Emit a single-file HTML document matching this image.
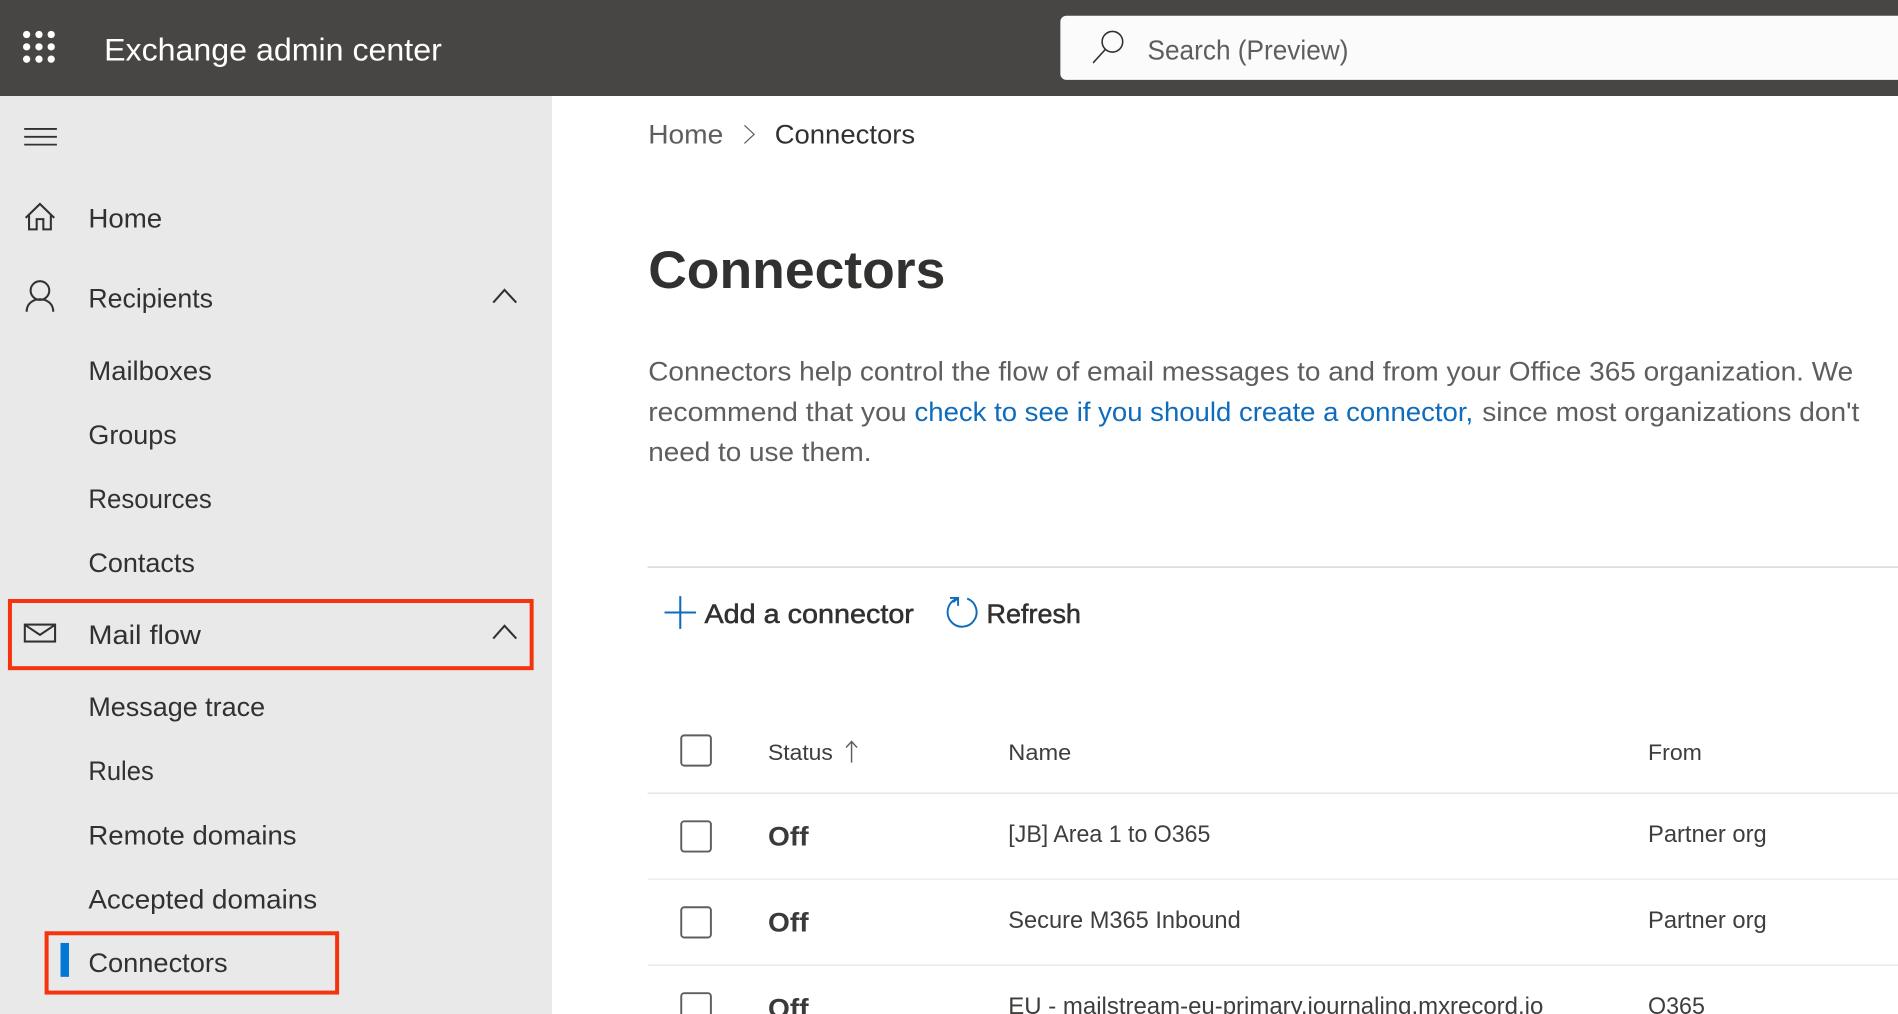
<!DOCTYPE html>
<html>
<head>
<meta charset="utf-8">
<title>Exchange admin center</title>
<style>
html,body{margin:0;padding:0;background:#fff;width:1898px;height:1014px;overflow:hidden}
svg{display:block}
text{font-family:"Liberation Sans",sans-serif;fill:#323130;font-size:22.5px}
.p{fill:#605e5c}
.l{fill:#0f6cbd}
.th{font-size:18.5px;fill:#3f3e3d}
.td{font-size:19.5px;fill:#3f3e3d}
.sb{stroke:#323130;stroke-width:.45px}
.off{font-size:22.5px;font-weight:bold;fill:#3b3a39}
.ic{fill:none;stroke:#323130;stroke-width:1.7}
.cb{fill:#fff;stroke:#605e5c;stroke-width:1.6}
</style>
</head>
<body>
<svg xmlns="http://www.w3.org/2000/svg" width="1898" height="1014" viewBox="0 0 1568 837.7">
<rect x="0" y="0" width="1568" height="837.7" fill="#ffffff"/>
<rect x="0" y="79" width="456" height="759" fill="#e9e9e9"/>
<rect x="0" y="0" width="1568" height="79.3" fill="#484644"/>

<g fill="#ffffff">
<circle cx="22" cy="28.5" r="3"/><circle cx="32.2" cy="28.5" r="3"/><circle cx="42.3" cy="28.5" r="3"/>
<circle cx="22" cy="38.7" r="3"/><circle cx="32.2" cy="38.7" r="3"/><circle cx="42.3" cy="38.7" r="3"/>
<circle cx="22" cy="48.9" r="3"/><circle cx="32.2" cy="48.9" r="3"/><circle cx="42.3" cy="48.9" r="3"/>
</g>
<text x="86" y="50" textLength="279" lengthAdjust="spacingAndGlyphs" style="fill:#fff;font-size:26px">Exchange admin center</text>

<rect x="876" y="13" width="720" height="53" rx="5" fill="#fbfbfb"/>
<circle cx="919" cy="34.500" r="8.500" fill="none" stroke="#323130" stroke-width="1.300"/>
<path d="M913 41L903 52" fill="none" stroke="#323130" stroke-width="1.300"/>
<text x="948" y="49" textLength="166" lengthAdjust="spacingAndGlyphs" style="fill:#605e5c;font-size:23px">Search (Preview)</text>

<path d="M20 106.500H47M20 113H47M20 119.500H47" fill="none" stroke="#323130" stroke-width="1.500"/>

<path class="ic" d="M21.200 180L33 168.500L44.800 180M24 177.500V189.500H30.300V181H35.800V189.500H42V177.500"/>
<text x="73" y="188" textLength="61" lengthAdjust="spacingAndGlyphs">Home</text>

<circle class="ic" cx="33" cy="240" r="7.700"/>
<path class="ic" d="M22 257.500C22 251 27 247.200 33 247.200C39 247.200 44 251 44 257.500"/>
<text x="73" y="254" textLength="103" lengthAdjust="spacingAndGlyphs">Recipients</text>
<path class="ic" d="M407.500 250L416.800 239.500L426.500 250"/>

<text x="73" y="314" textLength="102" lengthAdjust="spacingAndGlyphs">Mailboxes</text>
<text x="73" y="367" textLength="73" lengthAdjust="spacingAndGlyphs">Groups</text>
<text x="73" y="419.500" textLength="102" lengthAdjust="spacingAndGlyphs">Resources</text>
<text x="73" y="472.500" textLength="88" lengthAdjust="spacingAndGlyphs">Contacts</text>

<rect x="8.200" y="496.500" width="431" height="55.500" fill="none" stroke="#f5330e" stroke-width="3.300"/>
<rect x="20.500" y="516" width="25" height="14" fill="none" stroke="#323130" stroke-width="1.700"/>
<path class="ic" d="M21 516.500L33 524.500L45 516.500"/>
<text x="73" y="532" textLength="93" lengthAdjust="spacingAndGlyphs">Mail flow</text>
<path class="ic" d="M407.500 527.500L416.800 517L426.500 527.500"/>

<text x="73" y="591.500" textLength="146" lengthAdjust="spacingAndGlyphs">Message trace</text>
<text x="73" y="644.500" textLength="54" lengthAdjust="spacingAndGlyphs">Rules</text>
<text x="73" y="697.500" textLength="172" lengthAdjust="spacingAndGlyphs">Remote domains</text>
<text x="73" y="750.500" textLength="189" lengthAdjust="spacingAndGlyphs">Accepted domains</text>
<rect x="38.500" y="771" width="240" height="49" fill="none" stroke="#f5330e" stroke-width="3.300"/>
<rect x="50" y="779" width="7" height="28" fill="#0078d4"/>
<text x="73" y="803" textLength="115" lengthAdjust="spacingAndGlyphs">Connectors</text>

<text class="p" x="535.500" y="118.500" textLength="62" lengthAdjust="spacingAndGlyphs">Home</text>
<path d="M615 103.500L623 111L615 118.500" fill="none" stroke="#605e5c" stroke-width="1"/>
<text x="640" y="118.500" textLength="116" lengthAdjust="spacingAndGlyphs">Connectors</text>

<text x="535.500" y="238" textLength="245.500" lengthAdjust="spacingAndGlyphs" style="font-size:44px;font-weight:bold">Connectors</text>

<text class="p" x="535.500" y="314.500" textLength="995.500" lengthAdjust="spacingAndGlyphs">Connectors help control the flow of email messages to and from your Office 365 organization. We</text>
<text class="p" x="535.500" y="348" textLength="213.500" lengthAdjust="spacingAndGlyphs">recommend that you</text>
<text class="l" x="755.500" y="348" textLength="461.500" lengthAdjust="spacingAndGlyphs">check to see if you should create a connector,</text>
<text class="p" x="1224.500" y="348" textLength="311.500" lengthAdjust="spacingAndGlyphs">since most organizations don't</text>
<text class="p" x="535.500" y="381" textLength="184.500" lengthAdjust="spacingAndGlyphs">need to use them.</text>

<rect x="535" y="467.800" width="1033" height="1.500" fill="#dddddd"/>

<path d="M549 506H575M562 492.500V519.500" fill="none" stroke="#0f6cbd" stroke-width="1.700"/>
<text class="sb" x="582" y="514.500" textLength="173" lengthAdjust="spacingAndGlyphs">Add a connector</text>
<path d="M799 494.500A12 12 0 1 1 789.500 495" fill="none" stroke="#0f6cbd" stroke-width="1.600"/>
<path d="M784.800 494H791.500V500.500M791.500 494L787.500 497.500" fill="none" stroke="#0f6cbd" stroke-width="1.600"/>
<text class="sb" x="815" y="514.500" textLength="78" lengthAdjust="spacingAndGlyphs">Refresh</text>

<rect class="cb" x="562.800" y="607.500" width="24.500" height="25" rx="2.500"/>
<text class="th" x="634.500" y="628" textLength="53.500" lengthAdjust="spacingAndGlyphs">Status</text>
<path d="M703.500 612.500V630M699 617.500L703.500 612.500L708 617.500" fill="none" stroke="#605e5c" stroke-width="1.200"/>
<text class="th" x="833" y="628" textLength="52" lengthAdjust="spacingAndGlyphs">Name</text>
<text class="th" x="1361.500" y="628" textLength="44.500" lengthAdjust="spacingAndGlyphs">From</text>
<rect x="535" y="654.600" width="1033" height="1.500" fill="#e9e9e9"/>

<rect class="cb" x="562.800" y="678.500" width="24.500" height="25" rx="2.500"/>
<text class="off" x="634.500" y="698.500" textLength="33.500" lengthAdjust="spacingAndGlyphs">Off</text>
<text class="td" x="833" y="695.500" textLength="167" lengthAdjust="spacingAndGlyphs">[JB] Area 1 to O365</text>
<text class="td" x="1361.500" y="695.500" textLength="98" lengthAdjust="spacingAndGlyphs">Partner org</text>
<rect x="535" y="725.600" width="1033" height="1.500" fill="#eeeeee"/>

<rect class="cb" x="562.800" y="749.500" width="24.500" height="25" rx="2.500"/>
<text class="off" x="634.500" y="769.500" textLength="33.500" lengthAdjust="spacingAndGlyphs">Off</text>
<text class="td" x="833" y="766.500" textLength="192" lengthAdjust="spacingAndGlyphs">Secure M365 Inbound</text>
<text class="td" x="1361.500" y="766.500" textLength="98" lengthAdjust="spacingAndGlyphs">Partner org</text>
<rect x="535" y="796.600" width="1033" height="1.500" fill="#eeeeee"/>

<rect class="cb" x="562.800" y="820.500" width="24.500" height="25" rx="2.500"/>
<text class="off" x="634.500" y="840.500" textLength="33.500" lengthAdjust="spacingAndGlyphs">Off</text>
<text class="td" x="833" y="837.500" textLength="442" lengthAdjust="spacingAndGlyphs">EU - mailstream-eu-primary.journaling.mxrecord.io</text>
<text class="td" x="1361.500" y="837.500" textLength="47" lengthAdjust="spacingAndGlyphs">O365</text>
</svg>
</body>
</html>
